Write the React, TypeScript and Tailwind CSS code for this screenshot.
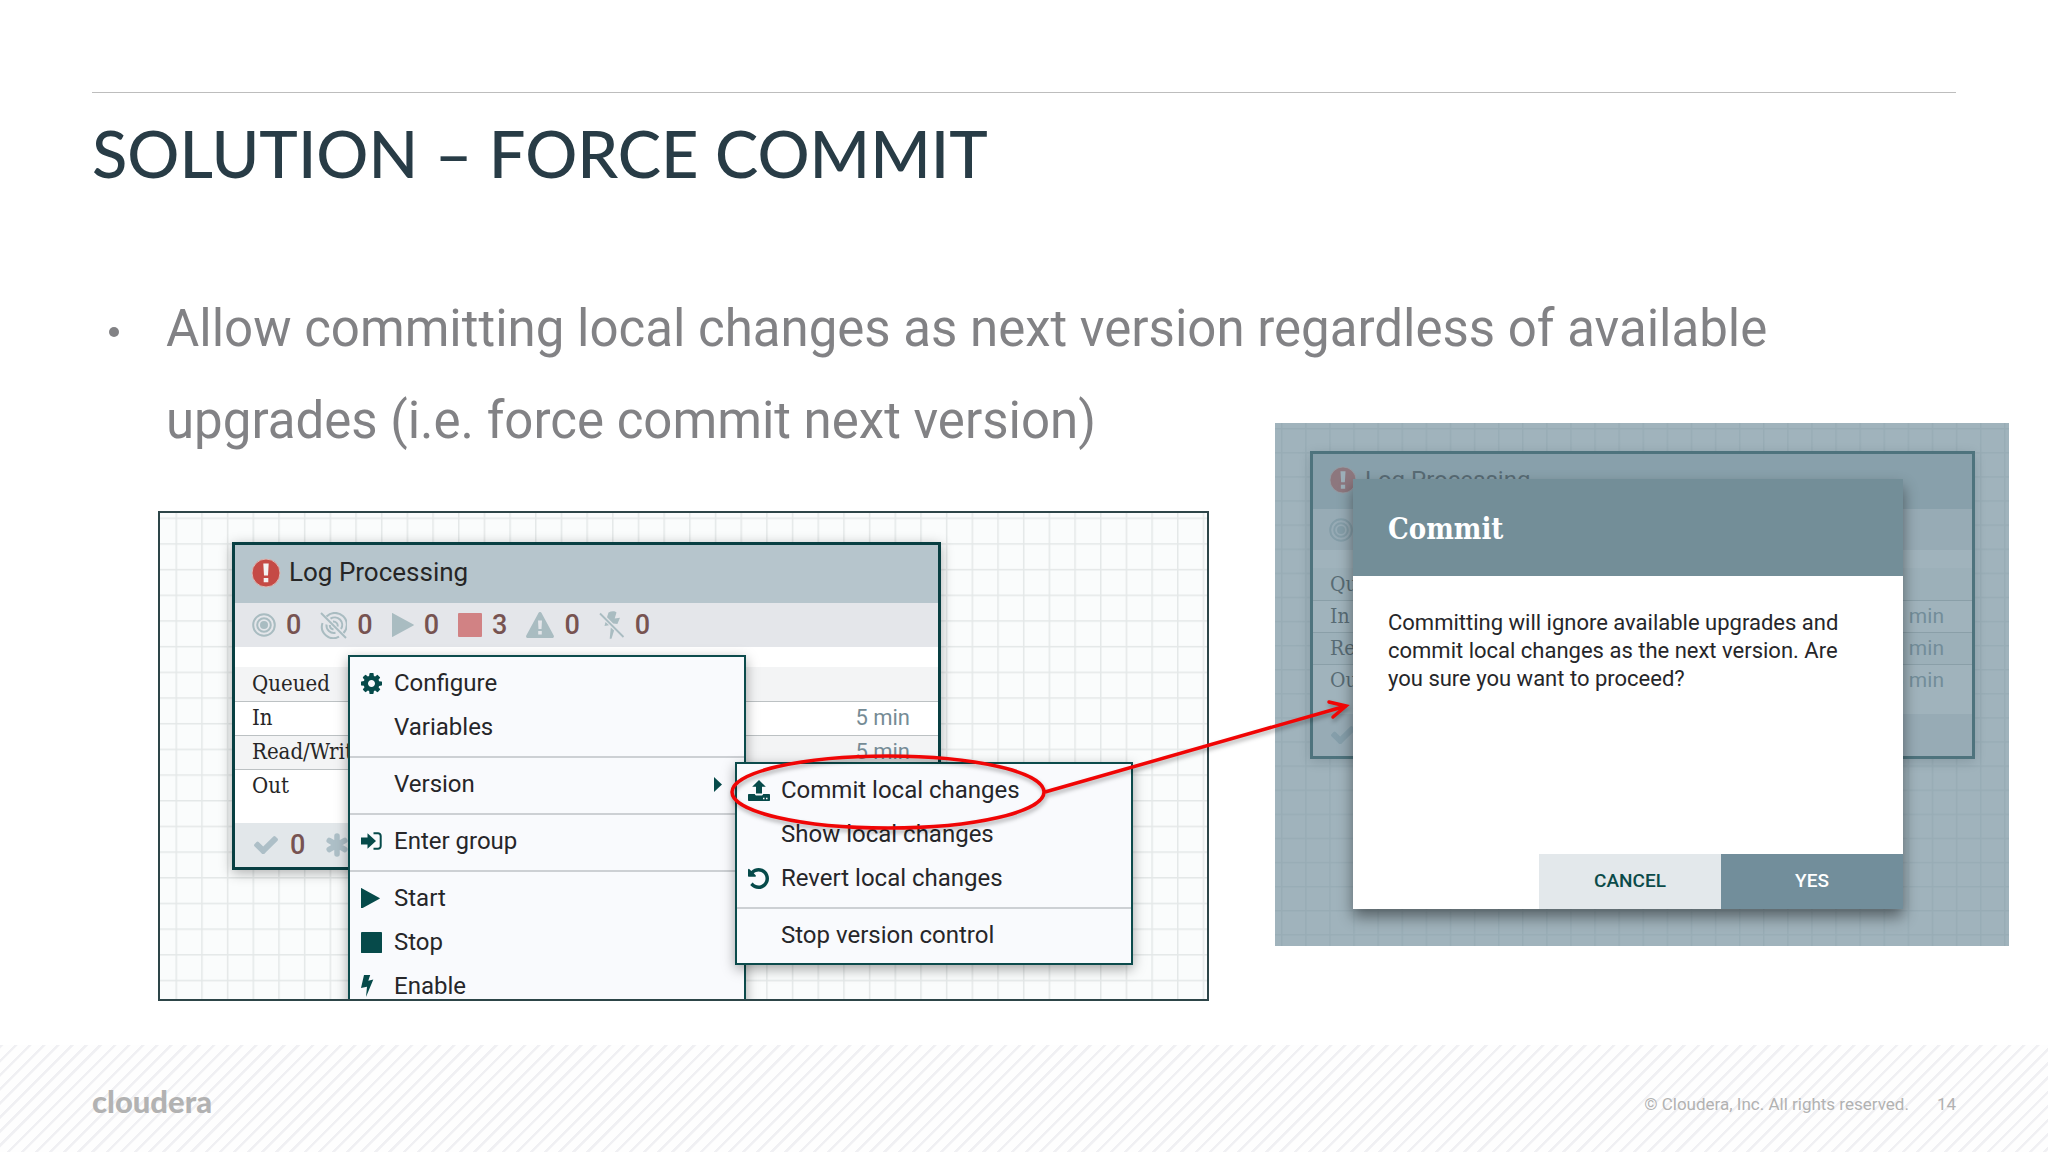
import { clsx } from "clsx";
import type { ReactNode } from "react";

const slab = "font-['Roboto_Slab','DejaVu_Serif_Condensed','DejaVu_Serif',serif]";

function BullseyeIcon({ className }: { className?: string }) {
  return (
    <svg className={className} viewBox="0 0 24 24" fill="none" stroke="currentColor" strokeWidth="2" aria-hidden="true">
      <circle cx="12" cy="12" r="10.8" />
      <circle cx="12" cy="12" r="6.8" />
      <circle cx="12" cy="12" r="4" fill="currentColor" stroke="none" />
    </svg>
  );
}

function BullseyeSlashIcon({ className }: { className?: string }) {
  return (
    <svg className={className} viewBox="0 0 27 27" fill="none" stroke="currentColor" strokeWidth="2" aria-hidden="true">
      <path d="M6.5 4.5A11.5 11.5 0 0 1 23.5 21M2.5 11A11.5 11.5 0 0 0 19 24.7" />
      <path d="M10.5 6.7A7.5 7.5 0 0 1 21 17M6.5 12.5A7.5 7.5 0 0 0 15.5 20.8" />
      <path d="M13 9.5A4.5 4.5 0 0 1 17.8 14.5M9.8 13A4.5 4.5 0 0 0 13.5 17.5" />
      <path d="M1 1l25 25" />
    </svg>
  );
}

function PlayIcon({ className }: { className?: string }) {
  return (
    <svg className={className} viewBox="0 0 22 24" fill="currentColor" aria-hidden="true">
      <path d="M0 .6v22.800c0 .5.4.6.8.4L21.500 12.500c.5-.3.5-.8 0-1L.8.200C.4 0 0 .100 0 .600z" />
    </svg>
  );
}

function StopIcon({ className }: { className?: string }) {
  return (
    <svg className={className} viewBox="0 0 24 24" fill="currentColor" aria-hidden="true">
      <rect width="24" height="24" rx="1" />
    </svg>
  );
}

function WarningIcon({ className }: { className?: string }) {
  return (
    <svg className={className} viewBox="0 0 28 26" fill="currentColor" fillRule="evenodd" aria-hidden="true">
      <path d="M12.600.8 .3 23.500C-.3 24.700.3 26 1.700 26h24.600c1.400 0 2-1.300 1.400-2.500L15.400.8c-.6-1.100-2.200-1.100-2.800 0zM12 8.500h4l-.5 8.500h-3zM12.200 19h3.600v3.500h-3.600z" />
    </svg>
  );
}

function BoltSlashIcon({ className }: { className?: string }) {
  return (
    <svg className={className} viewBox="0 0 26 28" fill="currentColor" aria-hidden="true">
      <path d="M9.500 1.500c3-1.800 6.500-1.800 8 0l-1.800 6 5.300-.8-2.600 6.300-4.200-.6L8 6.300zM6.500 11l3.500 3.200-4.500.8zM11.800 16.500l3.300 3-2.600 8.300h-1.800z" />
      <path d="M1 2.500l23.500 23.500" stroke="currentColor" strokeWidth="1.800" />
    </svg>
  );
}

function AlertIcon({ className }: { className?: string }) {
  return (
    <svg className={className} viewBox="0 0 30 30" aria-hidden="true">
      <circle cx="15" cy="15" r="14" fill="#c54a45" stroke="#dcb7b2" strokeWidth="1" />
      <path d="M12.300 5.500h5.400L17 17.500h-4zM12.700 20h4.600v4.300h-4.600z" fill="#f3f1f1" />
    </svg>
  );
}

function CheckIcon({ className }: { className?: string }) {
  return (
    <svg className={className} viewBox="121 334 1550 1188" fill="currentColor" aria-hidden="true">
      <path d="M1671 566q0 40-28 68l-724 724-136 136q-28 28-68 28t-68-28l-136-136-362-362q-28-28-28-68t28-68l136-136q28-28 68-28t68 28l294 295 656-657q28-28 68-28t68 28l136 136q28 28 28 68z" />
    </svg>
  );
}

function AsteriskIcon({ className }: { className?: string }) {
  return (
    <svg className={className} viewBox="0 0 24 24" fill="none" stroke="currentColor" strokeWidth="5.5" strokeLinecap="round" aria-hidden="true">
      <path d="M12 3v18M4.200 7.500l15.600 9M19.800 7.500l-15.600 9" />
    </svg>
  );
}

function CogIcon({ className }: { className?: string }) {
  return (
    <svg className={className} viewBox="128 128 1536 1536" fill="currentColor" aria-hidden="true">
      <path d="M1152 896q0-106-75-181t-181-75-181 75-75 181 75 181 181 75 181-75 75-181zm512-109v222q0 12-8 23t-20 13l-185 28q-19 54-39 91 35 50 107 138 10 12 10 25t-9 23q-27 37-99 108t-94 71q-12 0-26-9l-138-108q-44 23-91 38-16 136-29 186-7 28-36 28h-222q-14 0-24.500-8.500t-11.500-21.500l-28-184q-49-16-90-37l-141 107q-10 9-25 9-14 0-25-11-126-114-165-168-7-10-7-23 0-12 8-23 15-21 51-66.500t54-70.500q-27-50-41-99l-183-27q-13-2-21-12.500t-8-23.500v-222q0-12 8-23t19-13l186-28q14-46 39-92-40-57-107-138-10-12-10-24 0-10 9-23 26-36 98.500-107.500t94.500-71.500q13 0 26 10l138 107q44-23 91-38 16-136 29-186 7-28 36-28h222q14 0 24.500 8.500t11.500 21.500l28 184q49 16 90 37l142-107q9-9 24-9 13 0 25 10 129 119 165 170 7 8 7 22 0 12-8 23-15 21-51 66.500t-54 70.500q26 50 41 98l183 28q13 2 21 12.500t8 23.500z" />
    </svg>
  );
}

function UndoIcon({ className }: { className?: string }) {
  return (
    <svg className={className} viewBox="128 128 1536 1536" fill="currentColor" aria-hidden="true">
      <path d="M1664 896q0 156-61 298t-164 245-245 164-298 61q-172 0-327-72.500t-264-204.500q-7-10-6.500-22.500t8.500-20.500l137-138q10-9 25-9 16 2 23 12 73 95 179 147t225 52q104 0 198.500-40.500t163.500-109.500 109.500-163.500 40.500-198.500-40.500-198.500-109.500-163.500-163.500-109.500-198.500-40.500q-98 0-188 35.500t-160 101.500l137 138q31 30 14 69-17 40-59 40h-448q-26 0-45-19t-19-45v-448q0-42 40-59 39-17 69 14l130 129q107-101 244.500-156.500t284.500-55.500q156 0 298 61t245 164 164 245 61 298z" />
    </svg>
  );
}

function UploadIcon({ className }: { className?: string }) {
  return (
    <svg className={className} viewBox="0 0 22 21" fill="currentColor" fillRule="evenodd" aria-hidden="true">
      <path d="M11 0l6.800 6.800H14v6.700H8V6.800H4.200z" />
      <path d="M.8 14h6c.4 1 1 1.500 2.200 1.500h4c1.200 0 1.800-.5 2.200-1.500h6c.5 0 .8.300.8.800v5.400c0 .5-.3.800-.8.800H.8c-.5 0-.8-.3-.8-.8v-5.400c0-.5.3-.8.8-.8zM15 17.800v1.400h1.500v-1.400zM18 17.800v1.400h1.500v-1.400z" />
    </svg>
  );
}

function EnterIcon({ className }: { className?: string }) {
  return (
    <svg className={className} viewBox="0 0 21 18" aria-hidden="true">
      <path d="M0 5.500h6.500V1.200L15 9l-8.500 7.800v-4.300H0z" fill="currentColor" />
      <path d="M12.500 1.200H17a2.700 2.700 0 0 1 2.700 2.700v10.200A2.700 2.700 0 0 1 17 16.800h-4.500" fill="none" stroke="currentColor" strokeWidth="2" />
    </svg>
  );
}

function BoltIcon({ className }: { className?: string }) {
  return (
    <svg className={className} viewBox="0 0 13 22" fill="currentColor" aria-hidden="true">
      <path d="M3 0h6.200L7.300 5.800l5-1.200L5 22l1-10.300-6 1.400z" />
    </svg>
  );
}

function CanvasGrid({ id, step, x, y, stroke }: { id: string; step: number; x: number; y: number; stroke: string }) {
  return (
    <svg className="absolute inset-0 size-full" aria-hidden="true">
      <pattern id={id} x={x} y={y} width={step} height={step} patternUnits="userSpaceOnUse">
        <path d={`M.75 0V${step}M0 .75H${step}`} stroke={stroke} strokeWidth="1.5" fill="none" />
      </pattern>
      <rect width="100%" height="100%" fill={`url(#${id})`} />
    </svg>
  );
}

const stats = [
  { label: "Transmitting", value: 0, icon: <BullseyeIcon className="w-6" /> },
  { label: "Not transmitting", value: 0, icon: <BullseyeSlashIcon className="w-[27px]" /> },
  { label: "Running", value: 0, icon: <PlayIcon className="w-[22px]" /> },
  { label: "Stopped", value: 3, icon: <StopIcon className="w-6 text-[#d18284]" /> },
  { label: "Invalid", value: 0, icon: <WarningIcon className="w-7" /> },
  { label: "Disabled", value: 0, icon: <BoltSlashIcon className="w-[26px]" /> },
];

const flowRows = [
  { name: "Queued", window: "" },
  { name: "In", window: "5 min" },
  { name: "Read/Write", window: "5 min" },
  { name: "Out", window: "5 min" },
];

function ProcessGroup({ compact = false, className }: { compact?: boolean; className: string }) {
  return (
    <section
      className={clsx(
        "absolute flex flex-col border-[3px] border-[#083f42] bg-white text-[#262626] shadow-[0_3px_12px_rgba(0,0,0,0.3)]",
        className,
      )}
    >
      <h2
        className={clsx(
          "flex items-center gap-2 bg-[#b6c5cc] pb-[3px] pl-4",
          compact ? "h-[55px] text-2xl" : "h-[58px] text-[26px]",
        )}
      >
        <AlertIcon className={compact ? "size-7" : "size-[30px]"} />
        Log Processing
      </h2>
      <ul
        className={clsx(
          "flex items-center gap-[19px] bg-[#e4e6ea] font-medium text-[#a9bcc1]",
          compact ? "h-[41px] pl-4 text-2xl" : "h-11 pl-[17px] text-[27px]",
        )}
      >
        {stats.map((stat) => (
          <li className="flex items-center gap-[10px]" key={stat.label} title={stat.label}>
            {stat.icon}
            <span className="text-[#775351]">{stat.value}</span>
          </li>
        ))}
      </ul>
      <table className={clsx("w-full", compact ? "mt-[18px] text-[21px]" : "mt-5 text-[22px]")}>
        <tbody>
          {flowRows.map((row) => (
            <tr
              className={clsx(
                "border-b border-[#bcc1c3] odd:bg-[#f3f4f5] last:border-0 last:bg-white",
                compact ? "h-8" : "h-[34px]",
              )}
              key={row.name}
            >
              <th className={clsx("p-0 pl-[17px] text-left font-normal leading-7", slab)} scope="row">
                {row.name}
              </th>
              <td className="p-0 pr-7 text-right leading-7 text-[#758b95]">{row.window}</td>
            </tr>
          ))}
        </tbody>
      </table>
      <div
        className={clsx(
          "mt-auto flex items-center bg-[#e2e7ea] font-medium text-[#adbfc7]",
          compact ? "h-[42px] pl-[18px] text-2xl" : "h-11 pl-[19px] text-[27px]",
        )}
      >
        <CheckIcon className="mr-3 w-6" />
        <span className="mr-5 text-[#775351]">0</span>
        <AsteriskIcon className="size-6" />
      </div>
    </section>
  );
}

function MenuItem({ icon, children, submenu = false }: { icon?: ReactNode; children: ReactNode; submenu?: boolean }) {
  return (
    <li>
      <button className="flex h-11 w-full items-center pl-[11px] text-left" type="button">
        <span className="w-[33px] text-[#064a4a]">{icon}</span>
        {children}
        {submenu && (
          <svg className="mr-[22px] ml-auto h-[15px] w-2 text-[#064a4a]" viewBox="0 0 8 15" fill="currentColor" aria-hidden="true">
            <path d="M0 0l8 7.500L0 15z" />
          </svg>
        )}
      </button>
    </li>
  );
}

function MenuDivider() {
  return <li className="mt-[7px] mb-1 h-[2px] bg-[#cdd0d4]" role="separator" />;
}

function Menu({ className, children }: { className: string; children: ReactNode }) {
  return (
    <ul
      className={clsx(
        "absolute w-[398px] border-2 border-[#0c4b4c] bg-[#f9fafd] pt-1 pb-[6px] text-2xl text-[#262629] shadow-[0_4px_12px_rgba(0,0,0,0.35)]",
        className,
      )}
    >
      {children}
    </ul>
  );
}

function FlowCanvas() {
  return (
    <div className="relative mt-[88px] h-[490px] w-[1051px] shrink-0 overflow-hidden border-2 border-[#2d4548] bg-[#fafcfc]">
      <CanvasGrid id="flow-grid" step={25.68} x={15.5} y={4.5} stroke="#e4e8e8" />
      <ProcessGroup className="top-[29px] left-[72px] h-[328px] w-[709px]" />
      <Menu className="top-[142px] left-[188px]">
        <MenuItem icon={<CogIcon className="w-[21px]" />}>Configure</MenuItem>
        <MenuItem>Variables</MenuItem>
        <MenuDivider />
        <MenuItem submenu>Version</MenuItem>
        <MenuDivider />
        <MenuItem icon={<EnterIcon className="w-[21px]" />}>Enter group</MenuItem>
        <MenuDivider />
        <MenuItem icon={<PlayIcon className="w-[19px]" />}>Start</MenuItem>
        <MenuItem icon={<StopIcon className="w-[21px]" />}>Stop</MenuItem>
        <MenuItem icon={<BoltIcon className="w-[13px]" />}>Enable</MenuItem>
      </Menu>
      <Menu className="top-[249px] left-[575px]">
        <MenuItem icon={<UploadIcon className="w-[22px]" />}>Commit local changes</MenuItem>
        <MenuItem>Show local changes</MenuItem>
        <MenuItem icon={<UndoIcon className="w-[21px]" />}>Revert local changes</MenuItem>
        <MenuDivider />
        <MenuItem>Stop version control</MenuItem>
      </Menu>
    </div>
  );
}

function CommitDialog() {
  return (
    <div className="relative h-[523px] w-[734px] shrink-0 overflow-hidden bg-white">
      <CanvasGrid id="dialog-grid" step={24.1} x={6} y={5} stroke="#e6eaea" />
      <ProcessGroup className="top-7 left-[35px] h-[308px] w-[665px]" compact />
      <div className="absolute inset-0 bg-[#728e9b]/67" />
      <section
        aria-labelledby="commit-title"
        className="absolute top-14 left-[78px] flex h-[430px] w-[550px] flex-col bg-white shadow-[0_8px_14px_rgba(0,0,0,0.45)]"
        role="dialog"
      >
        <h2
          className={clsx("flex h-[97px] items-center bg-[#738e98] pt-1 pl-[35px] text-[29px] font-bold text-white", slab)}
          id="commit-title"
        >
          Commit
        </h2>
        <p className="px-[35px] pt-[33px] text-[22px] leading-7 text-[#262629]">
          Committing will ignore available upgrades and commit local changes as the next version. Are you sure you
          want to proceed?
        </p>
        <div className="mt-auto flex h-[55px] justify-end text-[19px] font-medium">
          <button className="w-[182px] bg-[#e3e8eb] text-[#0b4b49]" type="button">
            CANCEL
          </button>
          <button className="w-[182px] bg-[#728e9b] text-white" type="button">
            YES
          </button>
        </div>
      </section>
    </div>
  );
}

function Callout() {
  return (
    <svg
      className="pointer-events-none absolute top-0 left-0 size-full fill-none stroke-[#f00505] drop-shadow-[1px_3px_2px_rgba(0,0,0,0.3)]"
      strokeWidth="3.5"
      aria-hidden="true"
    >
      <ellipse cx="730" cy="369" rx="156" ry="36" />
      <path d="M887 369L1188 283" />
      <path d="M1171 279L1188 283L1175 294" strokeLinecap="round" />
    </svg>
  );
}

export default function App() {
  return (
    <div className="flex min-h-screen flex-col overflow-x-hidden bg-white font-[Roboto,sans-serif]">
      <header className="mx-[92px] mt-[92px] border-t border-[#bdbdbd] pt-5">
        <h1 className="font-[Lato,sans-serif] text-[65px] leading-20 font-medium text-[#283c46]">
          SOLUTION – FORCE COMMIT
        </h1>
      </header>

      <main className="pt-[90px]">
        <ul className="pr-[92px] pl-[109px] text-[51px] leading-[92px] text-[#828285]">
          <li className="flex gap-[47px]">
            <span className="mt-11 size-[10px] shrink-0 rounded-full bg-[#828285]" aria-hidden="true" />
            <p className="max-w-[1640px]">
              Allow committing local changes as next version regardless of available upgrades (i.e. force commit next
              version)
            </p>
          </li>
        </ul>
        <div className="relative -mt-11 ml-[158px] flex w-fit items-start gap-[66px]">
          <FlowCanvas />
          <CommitDialog />
          <Callout />
        </div>
      </main>

      <footer className="mt-auto flex h-[107px] items-center justify-between bg-[repeating-linear-gradient(135deg,#f0f0f3_0px,#f0f0f3_2px,#fefefe_3px,#fefefe_10px)] px-[92px] pt-2 text-[#b2b2b2]">
        <span className="pb-[2px] font-[Lato,sans-serif] text-[31px] font-black">cloudera</span>
        <p className="flex items-baseline gap-7 pt-1 text-[17px]">
          <span>© Cloudera, Inc. All rights reserved.</span>
          <span>14</span>
        </p>
      </footer>
    </div>
  );
}
